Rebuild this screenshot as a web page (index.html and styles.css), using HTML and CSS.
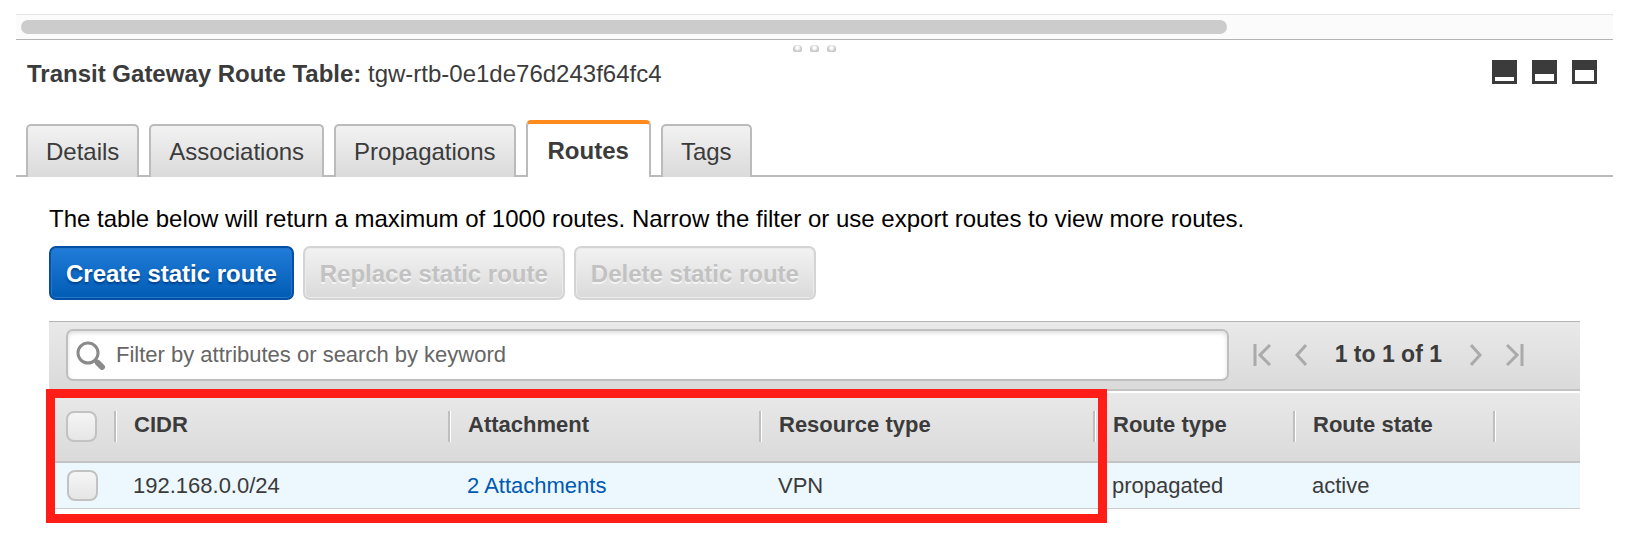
FILE: index.html
```html
<!DOCTYPE html>
<html lang="en">

<head>
    <meta charset="UTF-8">
    <meta name="viewport" content="width=device-width, initial-scale=1.0">
    <title>Transit Gateway Route Tables</title>
    <link rel="stylesheet" href="styles.css">
</head>

<body>
    <div class="scroll-track">
        <div class="scroll-thumb"></div>
    </div>

    <div class="splitter">
        <span class="dot"></span>
        <span class="dot"></span>
        <span class="dot"></span>
    </div>

    <header class="pane-header">
        <h1 class="pane-title">Transit Gateway Route Table: <span class="resource-id">tgw-rtb-0e1de76d243f64fc4</span></h1>
        <div class="pane-sizes">
            <button class="icon-btn" type="button" aria-label="Minimize pane">
                <svg width="25" height="24" viewBox="0 0 25 24"><path fill="#3b3b3b" d="M0 0h25v24H0z"/><path fill="#fff" d="M3 17h19v4H3z"/></svg>
            </button>
            <button class="icon-btn" type="button" aria-label="Split pane">
                <svg width="25" height="24" viewBox="0 0 25 24"><path fill="#3b3b3b" d="M0 0h25v24H0z"/><path fill="#fff" d="M3 14h19v7H3z"/></svg>
            </button>
            <button class="icon-btn" type="button" aria-label="Maximize pane">
                <svg width="25" height="24" viewBox="0 0 25 24"><path fill="#3b3b3b" d="M0 0h25v24H0z"/><path fill="#fff" d="M3 10h19v11H3z"/></svg>
            </button>
        </div>
    </header>

    <nav class="tabs" role="tablist">
        <button class="tab" type="button" role="tab">Details</button>
        <button class="tab" type="button" role="tab">Associations</button>
        <button class="tab" type="button" role="tab">Propagations</button>
        <button class="tab tab-active" type="button" role="tab" aria-selected="true">Routes</button>
        <button class="tab" type="button" role="tab">Tags</button>
    </nav>

    <main class="content">
        <p class="message">The table below will return a maximum of 1000 routes. Narrow the filter or use export routes to view more routes.</p>

        <div class="actions">
            <button class="btn btn-primary" type="button">Create static route</button>
            <button class="btn" type="button" disabled>Replace static route</button>
            <button class="btn" type="button" disabled>Delete static route</button>
        </div>

        <div class="toolbar">
            <div class="search">
                <label for="filter" aria-label="Filter routes">
                    <svg class="search-icon" width="30" height="30" viewBox="0 0 30 30" fill="none" stroke="#8a8a8a">
                        <circle cx="12" cy="13" r="10" stroke-width="3"/>
                        <path d="M19 20l3 3" stroke-width="4"/>
                        <path d="M22 23l4 4" stroke-width="6" stroke-linecap="round"/>
                    </svg>
                </label>
                <input id="filter" type="text" placeholder="Filter by attributes or search by keyword">
            </div>
            <div class="pager">
                <button class="icon-btn" type="button" aria-label="First page">
                    <svg width="18" height="22" viewBox="0 0 18 22" fill="none" stroke="#aaa" stroke-width="3"><path d="M2 0v22M17 1L7 11l10 10"/></svg>
                </button>
                <button class="icon-btn" type="button" aria-label="Previous page">
                    <svg width="12" height="22" viewBox="0 0 12 22" fill="none" stroke="#aaa" stroke-width="3"><path d="M11 1L2 11l9 10"/></svg>
                </button>
                <span class="range">1 to 1 of 1</span>
                <button class="icon-btn" type="button" aria-label="Next page">
                    <svg width="12" height="22" viewBox="0 0 12 22" fill="none" stroke="#aaa" stroke-width="3"><path d="M1 1l9 10-9 10"/></svg>
                </button>
                <button class="icon-btn" type="button" aria-label="Last page">
                    <svg width="18" height="22" viewBox="0 0 18 22" fill="none" stroke="#aaa" stroke-width="3"><path d="M16 0v22M1 1l10 10L1 21"/></svg>
                </button>
            </div>
        </div>

        <div class="table-wrap">
            <table class="routes">
                <colgroup>
                    <col class="col-check">
                    <col class="col-cidr">
                    <col class="col-attachment">
                    <col class="col-resource">
                    <col class="col-state">
                    <col class="col-state">
                    <col>
                </colgroup>
                <thead>
                    <tr>
                        <th><input class="check" type="checkbox" aria-label="Select all routes"></th>
                        <th><span class="head">CIDR</span></th>
                        <th><span class="head">Attachment</span></th>
                        <th><span class="head">Resource type</span></th>
                        <th><span class="head">Route type</span></th>
                        <th><span class="head">Route state</span></th>
                        <th><span class="head"></span></th>
                    </tr>
                </thead>
                <tbody>
                    <tr>
                        <td><input class="check" type="checkbox" aria-label="Select 192.168.0.0/24"></td>
                        <td>192.168.0.0/24</td>
                        <td><a href="#">2 Attachments</a></td>
                        <td>VPN</td>
                        <td>propagated</td>
                        <td>active</td>
                        <td></td>
                    </tr>
                </tbody>
            </table>
            <div class="highlight"></div>
        </div>
    </main>
</body>

</html>
```

FILE: styles.css
```css
* {
    box-sizing: border-box;
}

body {
    margin: 0;
    padding: 14px 29px 0 16px;
    background: #fff;
    color: #3b3b3b;
    font-family: "Liberation Sans", Arial, Helvetica, sans-serif;
    font-size: 24px;
}

button,
input {
    font-family: inherit;
    font-size: inherit;
    color: inherit;
}

/* bottom of the list pane */
.scroll-track {
    height: 26px;
    padding: 5px;
    background: #fbfbfb;
    border-top: 1px solid #e4e4e4;
    border-bottom: 1px solid #b3b3b3;
}

.scroll-thumb {
    width: 76%;
    height: 14px;
    background: #ccc;
    border-radius: 7px;
}

.splitter {
    display: flex;
    justify-content: center;
    gap: 8px;
    padding-top: 5px;
}

.dot {
    width: 9px;
    height: 7px;
    background: radial-gradient(circle at 50% 40%, #fff 1px, #c6c6c6 4px);
    border-radius: 4px 4px 2px 2px;
}

/* pane header */
.pane-header {
    display: flex;
    justify-content: space-between;
    align-items: flex-start;
    padding: 8px 16px 0 11px;
}

.pane-title {
    margin: 0;
    font-size: 24px;
    line-height: 28px;
}

.resource-id {
    font-weight: 400;
}

.pane-sizes {
    display: flex;
    gap: 15px;
}

.icon-btn {
    display: flex;
    padding: 0;
    background: none;
    border: none;
    cursor: pointer;
}

/* tabs */
.tabs {
    display: flex;
    align-items: flex-end;
    gap: 10px;
    height: 57px;
    margin-top: 32px;
    padding-left: 10px;
    box-shadow: inset 0 -2px #bbb;
}

.tab {
    height: 53px;
    padding: 0 18px;
    background: linear-gradient(#f2f2f2, #dadada);
    border: 2px solid #bbb;
    border-bottom: none;
    border-radius: 5px 5px 0 0;
    cursor: pointer;
}

.tab-active {
    height: 57px;
    padding: 0 20px;
    background: #fff;
    border-top: 4px solid #ff8b1f;
    font-weight: 700;
}

/* routes tab */
.content {
    padding: 28px 33px 48px;
}

.message {
    margin: 0;
    color: #000;
    line-height: 28px;
}

.actions {
    display: flex;
    gap: 9px;
    margin: 13px 0 21px;
}

.btn {
    height: 54px;
    padding: 2px 15px 0;
    background: linear-gradient(#f2f2f2, #dadada);
    border: 2px solid #d4d4d4;
    border-radius: 7px;
    box-shadow: inset 0 0 0 1px #ebebeb;
    color: #c2c2c2;
    font-weight: 700;
    text-shadow: 0 2px #f4f4f4;
}

.btn-primary {
    background: linear-gradient(#207cd8, #005cb4);
    border-color: #0550a4;
    box-shadow: inset 0 0 0 1px #2376c9;
    color: #fff;
    text-shadow: 0 2px 2px #00408a;
    cursor: pointer;
}

.toolbar {
    display: flex;
    align-items: center;
    gap: 24px;
    height: 70px;
    padding: 0 56px 2px 17px;
    background: linear-gradient(#e9e9e9, #dadada);
    border-top: 1px solid #b5b5b5;
    border-bottom: 2px solid #c3c3c3;
}

.search {
    display: flex;
    flex: 1;
    align-items: center;
    gap: 10px;
    height: 52px;
    padding: 0 8px;
    background: #fff;
    border: 2px solid #bfbfbf;
    border-radius: 7px;
    box-shadow: inset 0 2px 4px #ddd;
}

.search-icon {
    display: block;
}

#filter {
    flex: 1;
    min-width: 0;
    padding: 0;
    background: none;
    border: none;
    outline: none;
    font-size: 22px;
}

#filter::placeholder {
    color: #666;
    opacity: 1;
}

.pager {
    display: flex;
    align-items: center;
    gap: 24px;
}

.range {
    margin: 0 4px;
    font-size: 23px;
    font-weight: 700;
}

/* routes table */
.table-wrap {
    position: relative;
}

.routes {
    width: 100%;
    table-layout: fixed;
    border-collapse: separate;
    border-spacing: 0;
    font-size: 22px;
    text-align: left;
}

.col-check {
    width: 65px;
}

.col-cidr,
.col-resource {
    width: 334px;
}

.col-attachment {
    width: 311px;
}

.col-state {
    width: 200px;
}

.routes th {
    height: 72px;
    padding: 0 0 2px;
    background: linear-gradient(#e9e9e9, #dadada);
    border-top: 2px solid #fff;
    border-bottom: 2px solid #c3c3c3;
}

.routes td {
    height: 46px;
    padding: 0 0 0 19px;
    background: #ecf7fe;
    border-bottom: 1px solid #ccc;
}

.routes th:first-child {
    padding-left: 17px;
}

.routes td:first-child {
    padding-left: 18px;
}

.head {
    display: block;
    height: 31px;
    padding-left: 18px;
    border-left: 2px solid #bfbfbf;
    box-shadow: inset 1px 0 #fff;
    line-height: 28px;
}

.routes a {
    color: #0059b3;
    text-decoration: none;
}

.check {
    display: block;
    width: 31px;
    height: 31px;
    margin: 0;
    appearance: none;
    background: linear-gradient(#f5f5f5, #e6e6e6);
    border: 2px solid #c2c2c2;
    border-radius: 8px;
}

.highlight {
    position: absolute;
    top: -2px;
    left: -3px;
    width: 1061px;
    height: 134px;
    border: 9px solid #ff1d18;
    pointer-events: none;
}
```
